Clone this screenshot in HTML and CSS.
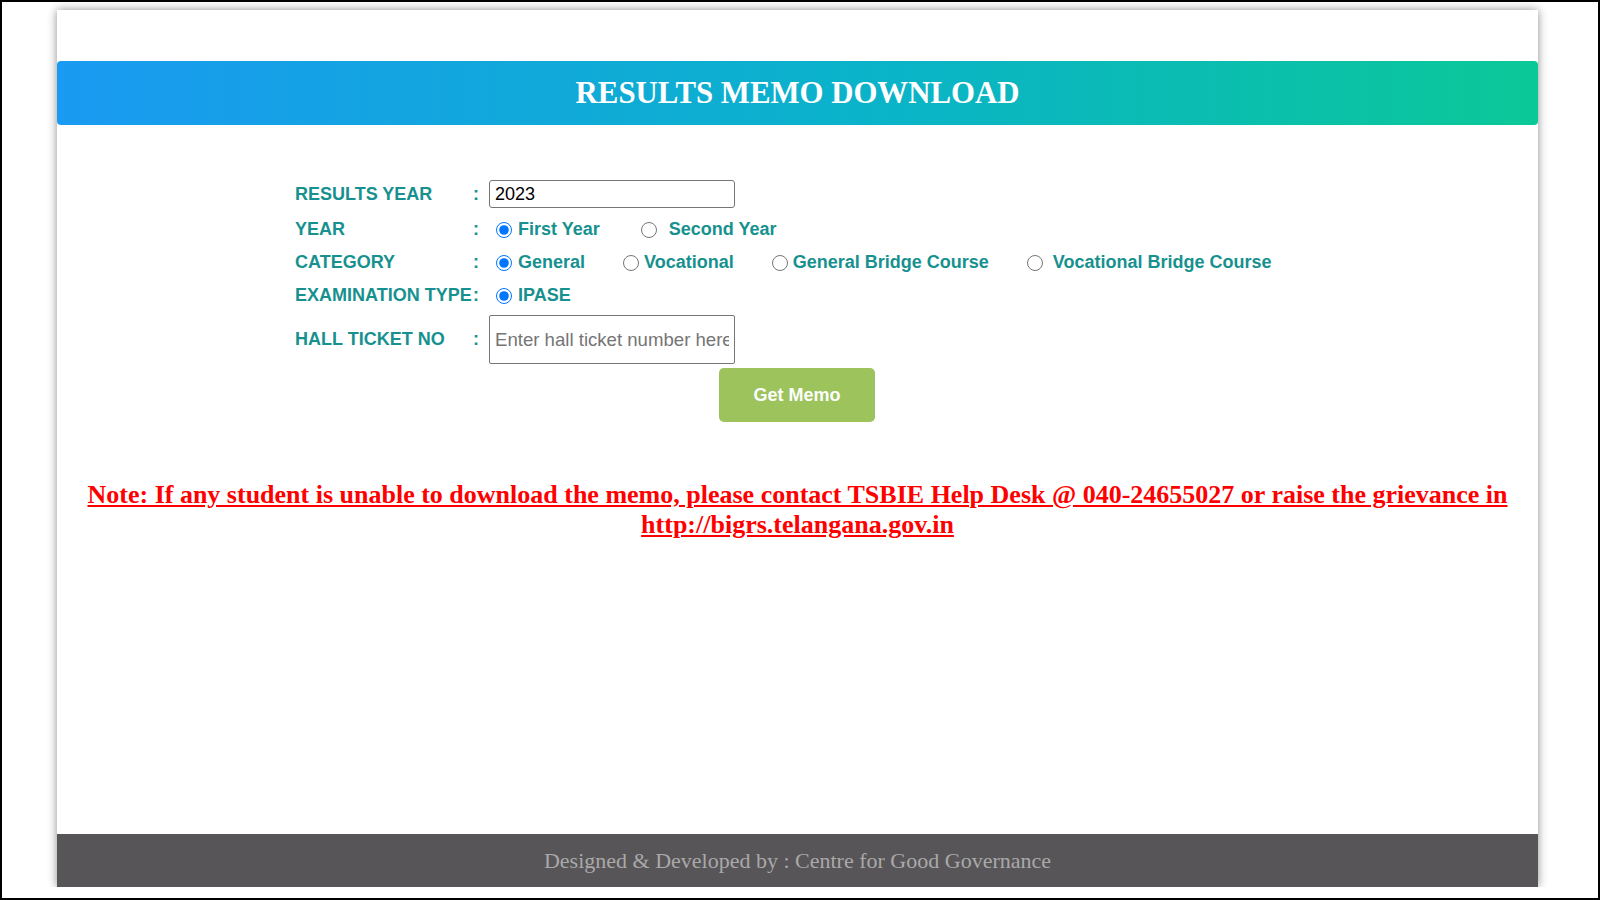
FILE: index.html
```html
<!DOCTYPE html>
<html lang="en">
<head>
  <meta charset="UTF-8">
  <title>Results Memo Download</title>
  <link rel="stylesheet" href="styles.css">
</head>
<body>

  <div class="page-card">
    <div class="page-header">RESULTS MEMO DOWNLOAD</div>

    <form class="memo-form">
      <div class="form-row form-row-first">
        <div class="label">RESULTS YEAR</div>
        <div class="colon">:</div>
        <div class="value">
          <input type="text" class="text-box" value="2023">
        </div>
      </div>
      <div class="form-row">
        <div class="label">YEAR</div>
        <div class="colon">:</div>
        <div class="value">
          <label class="opt opt-first"><input type="radio" name="year" checked><span>First Year</span></label>
          <label class="opt opt-year2 opt-wide"><input type="radio" name="year"><span>Second Year</span></label>
        </div>
      </div>
      <div class="form-row">
        <div class="label">CATEGORY</div>
        <div class="colon">:</div>
        <div class="value">
          <label class="opt opt-first"><input type="radio" name="cat" checked><span>General</span></label>
          <label class="opt opt-tight"><input type="radio" name="cat"><span>Vocational</span></label>
          <label class="opt opt-tight"><input type="radio" name="cat"><span>General Bridge Course</span></label>
          <label class="opt opt-mid"><input type="radio" name="cat"><span>Vocational Bridge Course</span></label>
        </div>
      </div>
      <div class="form-row">
        <div class="label">EXAMINATION TYPE</div>
        <div class="colon">:</div>
        <div class="value">
          <label class="opt opt-first"><input type="radio" name="exam" checked><span>IPASE</span></label>
        </div>
      </div>
      <div class="form-row form-row-last">
        <div class="label">HALL TICKET NO</div>
        <div class="colon">:</div>
        <div class="value">
          <input type="text" class="text-box text-box-tall" placeholder="Enter hall ticket number here">
        </div>
      </div>
      <div class="form-actions">
        <button type="button" class="btn-memo">Get Memo</button>
      </div>
    </form>

    <div class="note">
      <a href="#">Note: If any student is unable to download the memo, please contact TSBIE Help Desk @ 040-24655027 or raise the grievance in http://bigrs.telangana.gov.in</a>
    </div>

    <div class="page-footer">Designed &amp; Developed by : Centre for Good Governance</div>
  </div>

</body>
</html>
```

FILE: styles.css
```css
html {
  height: 100%;
  border: 2px solid #000;
  box-sizing: border-box;
  background: #fff;
}
body {
  margin: 0;
  font-family: 'Liberation Sans', Arial, sans-serif;
}
.page-card {
  width: 1481px;
  height: 877px;
  margin: 8px 0 0 55px;
  background: #fff;
  box-shadow: 0 0 9px rgba(0, 0, 0, 0.45);
  display: flex;
  flex-direction: column;
}
.page-header {
  margin-top: 51px;
  height: 64px;
  line-height: 64px;
  border-radius: 4px;
  background: linear-gradient(to right, #1a9af2, #0ab3c9 55%, #0bc898);
  color: #fff;
  text-align: center;
  font-family: 'Liberation Serif', 'Times New Roman', serif;
  font-weight: bold;
  font-size: 30.8px;
}
.memo-form {
  margin: 55px 0 0 238px;
}
.form-row {
  display: grid;
  grid-template-columns: 178px 16px auto;
  align-items: center;
  height: 33px;
  color: #17918f;
  font-size: 18px;
  font-weight: bold;
}
.form-row-first {
  height: 28px;
  margin-bottom: 5px;
}
.form-row-last {
  height: 49px;
  margin-top: 3px;
}
.value {
  display: flex;
  align-items: center;
}
.text-box {
  width: 246px;
  height: 28px;
  box-sizing: border-box;
  border: 1px solid #767676;
  border-radius: 3px;
  padding: 0 5px;
  font-family: 'Liberation Sans', Arial, sans-serif;
  font-size: 18px;
  color: #000;
}
.text-box-tall {
  height: 49px;
  border-radius: 2px;
  font-size: 18.6px;
}
.text-box::placeholder {
  color: #757575;
}
.opt {
  display: inline-flex;
  align-items: center;
  margin-left: 38px;
}
.opt input {
  width: 16px;
  height: 16px;
  margin: 0 5px 0 0;
}
.opt-first {
  margin-left: 7px;
}
.opt-year2 {
  margin-left: 41px;
}
.opt-first input {
  margin-right: 6px;
}
.opt-wide input {
  margin-right: 12px;
}
.opt-mid input {
  margin-right: 10px;
}
.form-actions {
  margin: 4px 0 0 424px;
}
.btn-memo {
  width: 156px;
  height: 54px;
  border: none;
  border-radius: 5px;
  background: #9cc35c;
  color: #fdfdfd;
  font-family: 'Liberation Sans', Arial, sans-serif;
  font-weight: bold;
  font-size: 18px;
}
.note {
  margin-top: 58px;
  padding: 0 20px;
  text-align: center;
  line-height: 30px;
  font-family: 'Liberation Serif', 'Times New Roman', serif;
  font-weight: bold;
  font-size: 26px;
}
.note a {
  color: #f00;
}
.page-footer {
  margin-top: auto;
  height: 53px;
  line-height: 53px;
  background: #575557;
  color: #a9a9a9;
  text-align: center;
  font-family: 'Liberation Serif', 'Times New Roman', serif;
  font-size: 22px;
}
```
